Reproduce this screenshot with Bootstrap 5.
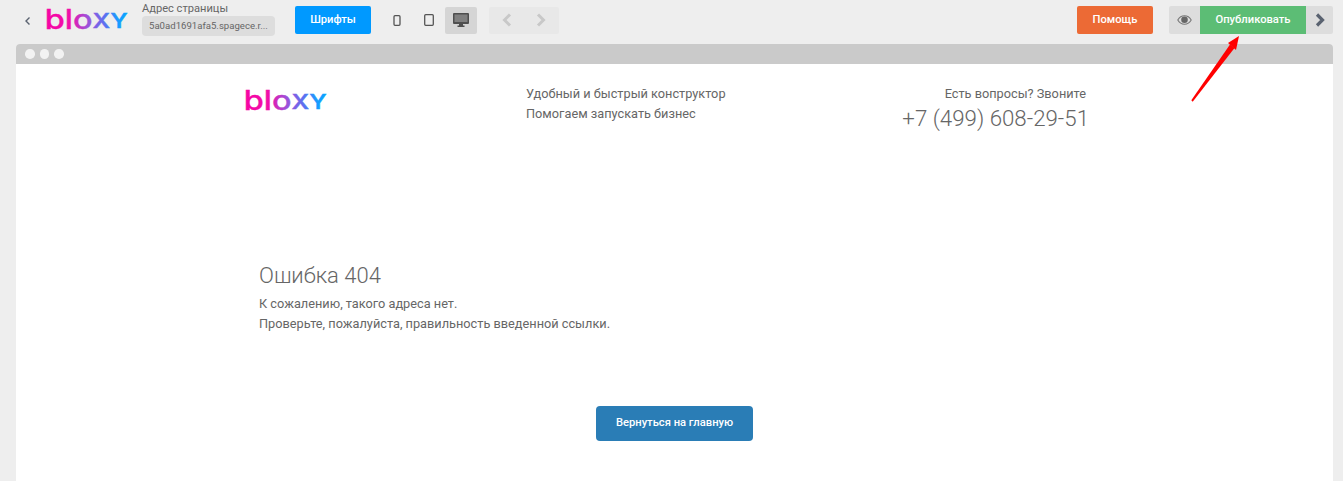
<!DOCTYPE html>
<html lang="ru">
<head>
<meta charset="utf-8">
<title>Bloxy</title>
<link href="https://cdn.jsdelivr.net/npm/bootstrap@5.3.0/dist/css/bootstrap.min.css" rel="stylesheet">
<style>
html,body{height:481px;overflow:hidden}
body{background:#eee;font-family:Roboto,"Liberation Sans",sans-serif;color:#666;font-size:12.75px;position:relative}
.tb{height:40px;padding-left:23px;padding-right:10px;margin-bottom:4px}
.logo-svg{display:block;overflow:visible}
.back-ic{width:9px;height:12px;margin-top:1px}
.tb-logo{margin-left:14px}
.addr{margin-left:14px;width:133px;align-self:flex-start;margin-top:1px}
.addr-l{font-size:11.1px;line-height:15px;color:#666}
.addr-v{background:#ddd;border-radius:4px;font-size:9.6px;height:20px;line-height:20px;padding:0 7px;color:#666;white-space:nowrap}
.act{height:28px;font-size:11.2px;font-weight:500;color:#fff;border:0;border-radius:2px;display:flex;align-items:center;justify-content:center;padding:0}
.fonts{width:76px;background:#09f;margin-left:20px}
.devs{margin-left:10px}
.dev{width:32px;height:27px;border-radius:2px;display:flex;align-items:center;justify-content:center}
.dev.on{background:#d5d5d5}
.undo{width:70px;height:27px;background:#e8e8e8;border-radius:2px;margin-left:12px;padding:0 13px}
.help{width:76px;background:#ec6a35}
.pub{background:#ddd;border-radius:2px;height:28px;margin-left:16px}
.pub-eye{width:31px;display:flex;align-items:center;justify-content:center}
.pub-go{width:106px;background:#5cbd75;border-radius:0}
.pub-nx{width:27px;display:flex;align-items:center;justify-content:center}
.frame{margin-left:16px;margin-right:10px;height:437px;background:#fff;border-radius:4px 4px 0 0;overflow:hidden}
.chrome{height:20px;background:#cacaca;padding-left:9px}
.dot{width:9.5px;height:9.5px;background:#f2f2f2;border-radius:50%;margin-right:5px}
.head{padding-left:229px;padding-top:20px;width:1071px}
.logo-c{width:281px;padding-top:5px}
.mid{width:300px;line-height:20px}
.rgt{width:261px;text-align:right;line-height:20px;padding-right:1px}
.phone{font-size:22.3px;font-weight:300;line-height:28px;margin-right:-3px}
.err{padding-left:243px;margin-top:130px}
.err h1{font-size:22px;font-weight:300;line-height:28px;margin:0 0 4px;color:#666}
.err p{margin:0;line-height:20px}
.home{display:block;width:157px;height:35px;background:#2a7db6;color:#fff;font-size:11.2px;font-weight:500;border:0;border-radius:4px;margin:72px 0 0 580px;padding:0}
.arrow{position:absolute;left:1185px;top:30px}
</style>
</head>
<body>
<div class="tb d-flex align-items-center">
  <svg class="back-ic" viewBox="0 0 9 12"><path d="M6.500 2.500 3 6l3.500 3.500" fill="none" stroke="#5a6270" stroke-width="1.400"/></svg>
  <svg class="logo-svg tb-logo" width="82" height="24" viewBox="0 0 82 24"><defs><linearGradient id="g1" gradientUnits="userSpaceOnUse" x1="0" x2="68" y1="0" y2="0"><stop offset="0" stop-color="#f704a4"/><stop offset=".3" stop-color="#f010aa"/><stop offset=".5" stop-color="#a050d8"/><stop offset=".72" stop-color="#5d70f0"/><stop offset=".88" stop-color="#1a9bff"/><stop offset="1" stop-color="#0ba3ff"/></linearGradient></defs><text transform="scale(1.2 1)" x="-1" y="20.500" font-family="Inter,sans-serif" font-size="27" font-weight="500" fill="url(#g1)" stroke="url(#g1)" stroke-width=".3">blo<tspan font-size="20.500" font-weight="600">XY</tspan></text></svg>
  <div class="addr">
    <div class="addr-l">Адрес страницы</div>
    <div class="addr-v">5a0ad1691afa5.spagece.r...</div>
  </div>
  <button class="act fonts">Шрифты</button>
  <div class="devs d-flex align-items-center">
    <div class="dev"><svg width="8" height="11" viewBox="0 0 8 11"><rect x="1" y=".7" width="6" height="9.600" rx="1" fill="#eee" stroke="#555" stroke-width="1.300"/></svg></div>
    <div class="dev"><svg width="10" height="12" viewBox="0 0 10 12"><rect x=".7" y=".7" width="8.600" height="10.600" rx="1" fill="#eee" stroke="#555" stroke-width="1.300"/></svg></div>
    <div class="dev on"><svg width="16" height="14" viewBox="0 0 16 14"><path d="M1 0h14a1 1 0 0 1 1 1v9a1 1 0 0 1-1 1H1a1 1 0 0 1-1-1V1a1 1 0 0 1 1-1z" fill="#4f4f4f"/><rect x="1.500" y="1.500" width="13" height="7.500" fill="#808080"/><path d="M6 11h4v1.500h1.500V14h-7v-1.500H6z" fill="#4f4f4f"/></svg></div>
  </div>
  <div class="undo d-flex align-items-center justify-content-between">
    <svg width="10" height="14" viewBox="0 0 10 14"><path d="M8 1.500 2.500 7 8 12.500" fill="none" stroke="#c8c8c8" stroke-width="3"/></svg>
    <svg width="10" height="14" viewBox="0 0 10 14"><path d="M2 1.500 7.500 7 2 12.500" fill="none" stroke="#c8c8c8" stroke-width="3"/></svg>
  </div>
  <button class="act help ms-auto">Помощь</button>
  <div class="pub d-flex">
    <div class="pub-eye"><svg width="15" height="10" viewBox="0 0 15 10"><path d="M.8 5C2.500 2 5 .8 7.500.8S12.500 2 14.200 5C12.500 8 10 9.200 7.500 9.200S2.500 8 .8 5z" fill="none" stroke="#777" stroke-width="1.100"/><circle cx="7.500" cy="4.800" r="3.300" fill="#666"/></svg></div>
    <button class="act pub-go">Опубликовать</button>
    <div class="pub-nx"><svg width="10" height="14" viewBox="0 0 10 14"><path d="M2 1.500 7.500 7 2 12.500" fill="none" stroke="#5a6270" stroke-width="3.200"/></svg></div>
  </div>
</div>
<div class="frame">
  <div class="chrome d-flex align-items-center"><span class="dot"></span><span class="dot"></span><span class="dot"></span></div>
  <div class="head d-flex">
    <div class="logo-c"><svg class="logo-svg" width="82" height="24" viewBox="0 0 82 24"><defs><linearGradient id="g2" gradientUnits="userSpaceOnUse" x1="0" x2="68" y1="0" y2="0"><stop offset="0" stop-color="#f704a4"/><stop offset=".3" stop-color="#f010aa"/><stop offset=".5" stop-color="#a050d8"/><stop offset=".72" stop-color="#5d70f0"/><stop offset=".88" stop-color="#1a9bff"/><stop offset="1" stop-color="#0ba3ff"/></linearGradient></defs><text transform="scale(1.2 1)" x="-1" y="20.500" font-family="Inter,sans-serif" font-size="27" font-weight="500" fill="url(#g2)" stroke="url(#g2)" stroke-width=".3">blo<tspan font-size="20.500" font-weight="600">XY</tspan></text></svg></div>
    <div class="mid">Удобный и быстрый конструктор<br>Помогаем запускать бизнес</div>
    <div class="rgt">Есть вопросы? Звоните<div class="phone">+7 (499) 608-29-51</div></div>
  </div>
  <div class="err">
    <h1>Ошибка 404</h1>
    <p>К сожалению, такого адреса нет.</p>
    <p>Проверьте, пожалуйста, правильность введенной ссылки.</p>
  </div>
  <button class="home">Вернуться на главную</button>
</div>
<svg class="arrow" width="62" height="76" viewBox="0 0 62 76"><path d="M6.300 70.300 45 14.500 49.500 18 7.700 71.700z" fill="#f00"/><path d="M54 6 43 13 51 20z" fill="#f00"/></svg>
<script src="https://cdn.jsdelivr.net/npm/bootstrap@5.3.0/dist/js/bootstrap.bundle.min.js"></script>
</body>
</html>
